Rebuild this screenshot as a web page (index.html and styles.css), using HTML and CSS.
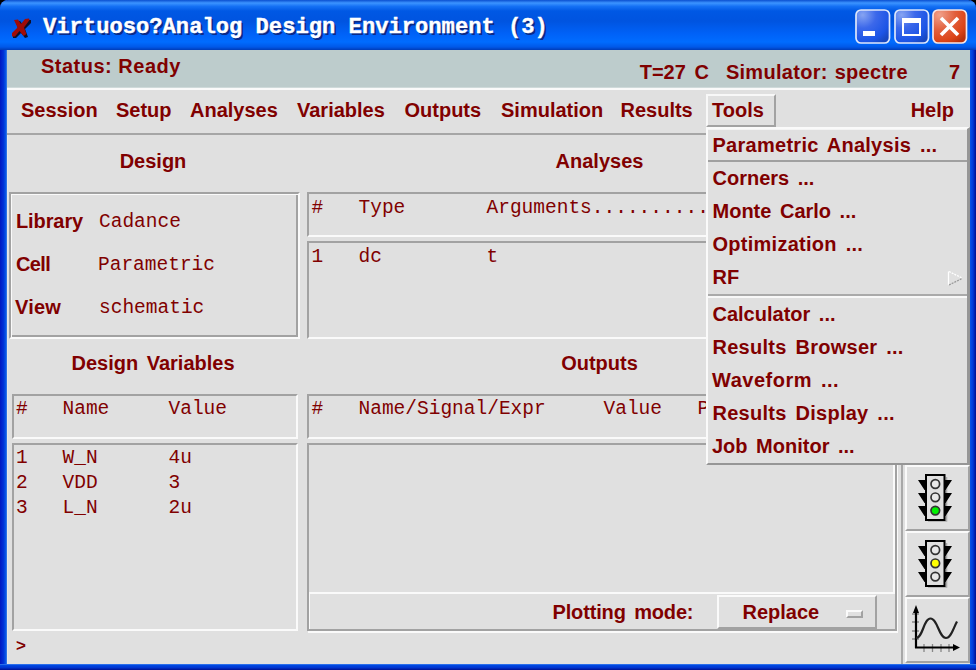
FILE: index.html
```html
<!DOCTYPE html>
<html lang="en">
<head>
<meta charset="utf-8">
<title>Virtuoso Analog Design Environment</title>
<link rel="stylesheet" href="styles.css">
</head>
<body>
<div class="window">
  <header class="titlebar">
    <svg class="logo" width="20" height="22" viewBox="0 0 20 22"><path d="M5 4 9 3 12 7 16 2 20 2 20 5 14 11 17 19 14 20 10 15 5 20 2 20 2 17 7 11Z" fill="#100408" opacity=".85"/><path d="M3 2 7 1.500 10 6 14 1 18 0.500 18.500 2 13 9.500 15.500 16 12.500 18 8.500 13 4 18.500 1 18.500 1 15 6.500 9.500Z" fill="#a00b08"/></svg>
    <h1 class="title">Virtuoso?Analog Design Environment (3)</h1>
    <div class="controls">
      <svg width="36" height="36" viewBox="0 0 36 36"><defs><radialGradient id="b" cx=".2" cy=".15" r="1"><stop offset="0" stop-color="#86a4f2"/><stop offset=".4" stop-color="#3c68ea"/><stop offset=".8" stop-color="#1c55e6"/><stop offset="1" stop-color="#1747c0"/></radialGradient></defs><rect x="1" y="1" width="33.500" height="33" rx="5" fill="url(#b)" stroke="#dfe8fb" stroke-width="1.700"/><rect x="8" y="22" width="12" height="5" fill="#fff"/></svg>
      <svg width="36" height="36" viewBox="0 0 36 36"><rect x="1" y="1" width="33.500" height="33" rx="5" fill="url(#b)" stroke="#dfe8fb" stroke-width="1.700"/><path d="M8 9h19v18H8zM10 14v11h15V14z" fill="#fff" fill-rule="evenodd"/></svg>
      <svg width="36" height="36" viewBox="0 0 36 36"><defs><radialGradient id="r" cx=".2" cy=".15" r="1"><stop offset="0" stop-color="#f0a08a"/><stop offset=".45" stop-color="#e2603d"/><stop offset=".8" stop-color="#dc4417"/><stop offset="1" stop-color="#b8300c"/></radialGradient></defs><rect x="1" y="1" width="33.500" height="33" rx="5" fill="url(#r)" stroke="#f6e6e6" stroke-width="1.700"/><path d="m9 9 17 17M26 9 9 26" stroke="#fff" stroke-width="3.600"/></svg>
    </div>
  </header>
  <div class="status">
    <span class="state">Status: Ready</span>
    <span class="temp">T=27 C</span><span class="sim">Simulator: spectre</span><span class="count">7</span>
  </div>
  <nav class="menubar">
    <span class="m1">Session</span><span class="m2">Setup</span><span class="m3">Analyses</span><span class="m4">Variables</span><span class="m5">Outputs</span><span class="m6">Simulation</span><span class="m7">Results</span><span class="open">Tools</span><span class="help">Help</span>
    <div class="dropdown">
      <div class="item active wide">Parametric Analysis ...</div>
      <div class="item">Corners ...</div>
      <div class="item">Monte Carlo ...</div>
      <div class="item wide">Optimization ...</div>
      <div class="item">RF<svg class="arrow" width="16" height="16" viewBox="0 0 16 16" fill="none" stroke-width="1.300"><path d="M1.500 15V1.500" stroke="#fff"/><path d="M2 1.500 15 8" stroke="#fff" stroke-dasharray="2 1"/><path d="M2 15 15 8.500" stroke="#999" stroke-dasharray="2 1"/></svg></div>
      <div class="rule"></div>
      <div class="item">Calculator ...</div>
      <div class="item wide">Results Browser ...</div>
      <div class="item nudge wider">Waveform ...</div>
      <div class="item wide">Results Display ...</div>
      <div class="item nudge">Job Monitor ...</div>
    </div>
  </nav>
  <main class="main">
    <section class="left">
      <h2>Design</h2>
      <div class="design">
        <b class="k1">Library</b><span class="mono">Cadance</span>
        <b class="k2">Cell</b><span class="mono shift">Parametric</span>
        <b class="k3">View</b><span class="mono">schematic</span>
      </div>
      <h2 class="second">Design Variables</h2>
      <div class="well head vars mono"><span>#</span><span>Name</span><span>Value</span></div>
      <div class="well list vars varlist mono">
        <span>1</span><span>W_N</span><span>4u</span>
        <span>2</span><span>VDD</span><span>3</span>
        <span>3</span><span>L_N</span><span>2u</span>
      </div>
      <div class="prompt">&gt;</div>
    </section>
    <section class="right">
      <h2>Analyses</h2>
      <div class="well head analyses mono"><span>#</span><span>Type</span><span>Arguments..........</span></div>
      <div class="well list analyses anlist mono"><span>1</span><span>dc</span><span>t</span></div>
      <h2 class="second">Outputs</h2>
      <div class="well head outputs mono"><span>#</span><span>Name/Signal/Expr</span><span>Value</span><span>P</span></div>
      <div class="outbox">
        <div class="outlist"></div>
        <div class="plot"><span class="plabel">Plotting mode:</span><span class="option"><span>Replace</span><i></i></span></div>
      </div>
    </section>
    <aside class="tools">
      <div></div><div></div><div></div><div></div><div></div>
      <div><svg width="36" height="50" viewBox="0 0 36 50"><g id="lamp"><path d="M29.500 4v44H11" fill="none" stroke="#aaa" stroke-width="1.600"/><path d="M1 7h8v10H7.500zM1 20h8v10H7.500zM1 33h8v10H7.500zM35 7h-8v10h1.500zM35 20h-8v10h1.500zM35 33h-8v10h1.500z" fill="#000"/><path d="M9 2h18.500v45H9z" fill="#e0e0e0" stroke="#000" stroke-width="2"/></g><g stroke="#333" stroke-width="1.700"><circle cx="18.300" cy="11" r="4.300" fill="#e8e8e8"/><circle cx="18.300" cy="24.300" r="4.300" fill="#e8e8e8"/><circle cx="18.300" cy="37.600" r="4.300" fill="#00f000"/></g></svg></div>
      <div><svg width="36" height="50" viewBox="0 0 36 50"><use href="#lamp"/><g stroke="#333" stroke-width="1.700"><circle cx="18.300" cy="11" r="4.300" fill="#e8e8e8"/><circle cx="18.300" cy="24.300" r="4.300" fill="#ff0"/><circle cx="18.300" cy="37.600" r="4.300" fill="#e8e8e8"/></g></svg></div>
      <div><svg class="wave" width="50" height="48" viewBox="0 0 50 48" fill="none"><path d="M2 10h7M2 18h7M2 27h7M2 35h7M14 40v8M22.500 40v8M31 40v8M39 40v8" stroke="#888" stroke-width="1.300"/><path d="M6 44V5M5 43.500h40" stroke="#000" stroke-width="2.200"/><path d="m6 1 3 8H3zM50 43.500l-7-3.500v7z" fill="#000"/><path d="M6 34C13 34 13.500 14.500 20.500 14.500S29 34 36 34c5 0 7-9 11-16.500" stroke="#222" stroke-width="2.200"/></svg></div>
    </aside>
  </main>
</div>
</body>
</html>
```
FILE: styles.css
```css
* { box-sizing: border-box; }
body { margin: 0; background: #000; }
.window {
  width: 976px; height: 670px; overflow: hidden;
  display: grid; grid-template-rows: 50px 38px 47px 529px;
  padding: 0 6px 6px 7px;
  border-radius: 8px 8px 0 0;
  background:
    linear-gradient(#4080f0, #0047e0 25%, #0035d0 60%, #001090) 0 100% / 100% 6px no-repeat,
    linear-gradient(90deg, #0018c0, #0032d8 50%, #0855e4 80%, #3f80e8) 0 0 / 7px 100% no-repeat,
    linear-gradient(90deg, #0855e8, #0038d8 50%, #001090) 100% 0 / 6px 100% no-repeat;
  color: #800000;
  font: bold 20px/24px "Liberation Sans", Arial, sans-serif;
  word-spacing: 3px;
  white-space: nowrap;
}
.titlebar {
  margin: 0 -6px 0 -7px; padding: 9px 8px 0 11px;
  display: flex; align-items: flex-start;
  background: linear-gradient(#0a4fd0 0, #3c94ff 6%, #1470f4 13%, #0058e4 22%, #0054e0 42%, #0062f8 68%, #006cff 84%, #0058e8 94%, #003cb8 100%);
}
.logo { margin-top: 9px; }
.title {
  margin: 7px 0 0 12px; word-spacing: 0;
  font: bold 22.150px/24px "Liberation Mono", "Courier New", monospace;
  color: #fff; text-shadow: 2px 2px 0 #0a2a88;
  -webkit-text-stroke: .4px #fff;
}
.controls { display: flex; gap: 2.500px; margin-left: auto; }
.status { background: #bdcccc; display: flex; border-bottom: 1px solid #cfdada; }
.state { margin: 4px 0 0 34px; letter-spacing: .5px; word-spacing: 0; }
.temp { margin: 10px 17px 0 auto; letter-spacing: 0; }
.sim { margin-top: 10px; width: 223px; letter-spacing: .3px; word-spacing: 1px; }
.count { margin: 10px 10px 0 0; }
.menubar {
  position: relative; display: flex; align-items: flex-start;
  padding: 8px 0 0 14px; background: #e0e0e0;
  border-top: 2px solid #fafafa; border-bottom: 2px solid #a6a6a6;
}
.m1 { width: 95px; } .m2 { width: 74px; } .m3 { width: 107px; } .m4 { width: 107.500px; }
.m5 { width: 96.500px; } .m6 { width: 119.500px; } .m7 { width: 85.500px; }
.menubar > .open {
  width: 70px; height: 33px; margin-top: -4px; padding: 4px 0 0 4px;
  border: solid; border-width: 2px; border-color: #f8f8f8 #a2a2a2 #a2a2a2 #f8f8f8;
  line-height: 20px;
}
.help { margin: 0 16px 0 auto; }
.dropdown {
  position: absolute; z-index: 2; left: 699px; top: 37px; width: 264px; height: 338px;
  background: #e0e0e0; border: solid; border-width: 2px 3px 2px 2px;
  border-color: #fafafa #969696 #969696 #fafafa;
}
.item { height: 33px; padding-left: 4.500px; line-height: 33px; display: flex; }
.wide { letter-spacing: .27px; }
.wider { letter-spacing: .5px; }
.active { border: solid; border-width: 1px 0 2px; border-color: #f4f4f4 #969696 #a0a0a0; line-height: 31px; }
.nudge { padding-left: 4px; }
.arrow { margin: 9px 4px 0 auto; }
.rule { height: 4px; border-top: 2px solid #aaa; border-bottom: 2px solid #f8f8f8; }
.main { display: grid; grid-template-columns: 295px 1fr 69px; background: #e0e0e0; border-left: 1px solid #e8e8e8; }
.left, .right { display: flex; flex-direction: column; }
h2 { margin: 0; height: 57px; padding-top: 14px; font-size: 20px; line-height: 24px; text-align: center; }
h2.second { height: 55px; padding-top: 12px; }
.left h2 { padding-right: 5px; }
.right h2 { padding-right: 9px; }
.design {
  width: 291px; height: 147px; margin-left: 1px; padding: 11px 0 0 5px;
  display: grid; grid-template-columns: 83px 1fr; grid-auto-rows: 43px;
  align-items: start; line-height: 32px;
  border: 2px solid; border-color: #a2a2a2 #fafafa #fafafa #a2a2a2;
  box-shadow: inset 1px 1px #fafafa, inset -2px -2px #a2a2a2;
}
.design .mono { padding-top: 1px; }
.k1 { letter-spacing: -.1px; }
.k2 { letter-spacing: -.6px; }
.k3 { letter-spacing: .2px; margin-left: -1px; }
.shift { margin-left: -1px; }
.mono { font-family: "Liberation Mono", "Courier New", monospace; font-size: 19.500px; font-weight: normal; word-spacing: 0; }
.well { border: 2px solid; border-color: #a2a2a2 #fafafa #fafafa #a2a2a2; display: grid; align-content: start; line-height: 25px; }
.head { height: 45px; padding-top: 1px; margin-bottom: 4px; }
.head.analyses { padding-top: 2px; }
.vars { width: 286px; margin-left: 4px; padding-left: 2px; grid-template-columns: 46.500px 106px 1fr; grid-auto-rows: 25px; }
.varlist { height: 188px; padding-top: 1px; }
.prompt { padding: 3px 0 0 8px; font-size: 17px; }
.right { padding-left: 4px; }
.right > .well { width: 590px; padding-left: 2.500px; }
.analyses { grid-template-columns: 47px 128px 1fr; }
.right > .anlist { height: 98px; padding-top: 2px; }
.outputs { grid-template-columns: 47px 245px 94px 1fr; }
.outbox { width: 590px; height: 188px; border: 2px solid #a2a2a2; box-shadow: 1px 2px #fafafa; display: flex; flex-direction: column; }
.outlist { height: 147px; border-right: 2px solid #fafafa; }
.plot { flex: 1; display: flex; border-top: 2px solid #fafafa; border-left: 1px solid #fafafa; }
.plabel { margin: 6px 0 0 242.500px; width: 164.500px; letter-spacing: -.15px; }
.option {
  width: 160px; height: 34px; margin-top: 1px; padding: 3px 12px 0 23.500px;
  display: flex; align-items: flex-start; justify-content: space-between;
  border: 2px solid; border-color: #fafafa #a2a2a2 #a2a2a2 #fafafa;
}
.option i { width: 17px; height: 8px; margin-top: 10px; border: 2px solid; border-color: #fafafa #a2a2a2 #a2a2a2 #fafafa; }
.tools { display: grid; grid-template-rows: repeat(8, 66px); border-left: 2px solid #a8a8a8; padding-left: 2px; }
.tools > div { border: 2px solid; border-color: #fafafa #a2a2a2 #a2a2a2 #fafafa; padding: 6px 0 0 10px; }
.tools > div > svg { display: block; }
.tools > div > .wave { margin: -1px 0 0 -7px; }
```
